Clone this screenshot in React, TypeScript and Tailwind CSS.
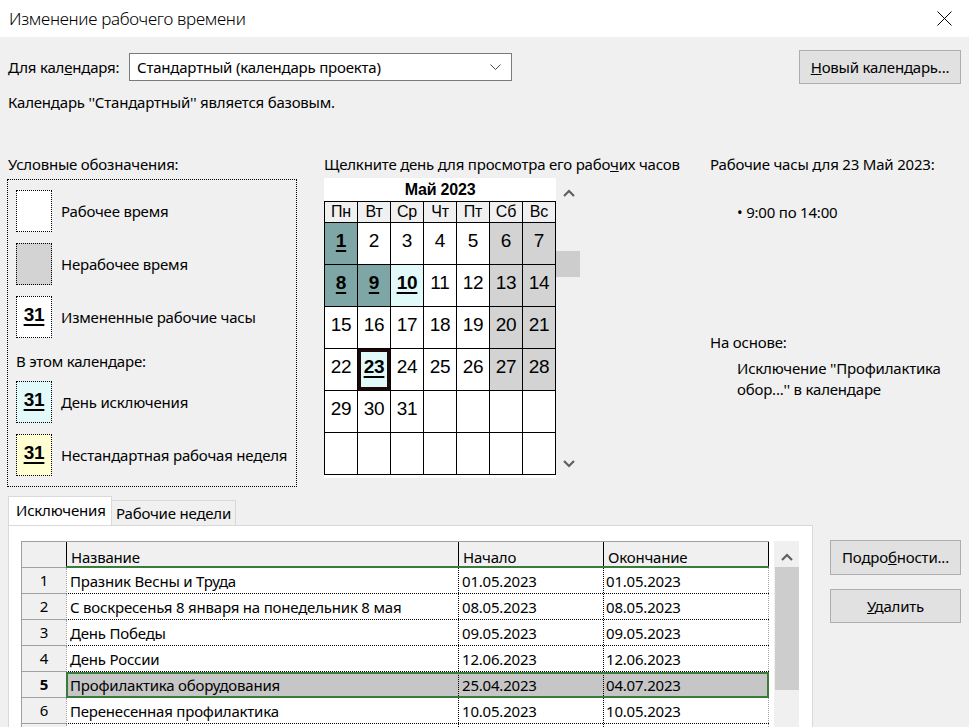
import React from "react";

const UI = "font-['Noto_Sans','Open_Sans',sans-serif]";
const ARIAL = "font-['Liberation_Sans',Arial,sans-serif]";

const DARK = "bg-[#7ea6a6]";
const LIGHT = "bg-[#e2f9f9]";
const YELLOW = "bg-[#ffffd2]";

function Chevron({ dir, className }: { dir: "up" | "down"; className?: string }) {
  return (
    <svg width="12" height="8" viewBox="0 0 12 8" className={className}>
      {dir === "up" ? (
        <polyline points="1,7 6,2 11,7" fill="none" stroke="#606060" strokeWidth="2.2" />
      ) : (
        <polyline points="1,1 6,6 11,1" fill="none" stroke="#606060" strokeWidth="2.2" />
      )}
    </svg>
  );
}

function Swatch({ kind }: { kind: "work" | "non" | "changed" | "exc" | "week" }) {
  const bg =
    kind === "work" ? "bg-white" : kind === "non" ? "bg-[#d3d3d3]" : kind === "changed" ? "bg-white" : kind === "exc" ? LIGHT : YELLOW;
  return (
    <div className={`w-[36px] h-[42px] border border-dotted border-black flex justify-center ${bg}`}>
      {kind === "changed" || kind === "exc" || kind === "week" ? (
        <span className={`${ARIAL} text-[19px] font-bold underline underline-offset-[3px] decoration-[1.5px] leading-none mt-[8px]`}>31</span>
      ) : null}
    </div>
  );
}

type CellT = "w" | "n" | "dark" | "light" | "sel";

const weeks: (number | null)[][] = [
  [1, 2, 3, 4, 5, 6, 7],
  [8, 9, 10, 11, 12, 13, 14],
  [15, 16, 17, 18, 19, 20, 21],
  [22, 23, 24, 25, 26, 27, 28],
  [29, 30, 31, null, null, null, null],
  [null, null, null, null, null, null, null],
];

function cellType(n: number | null, col: number): CellT {
  if (n === null) return "w";
  if (n === 1 || n === 8 || n === 9) return "dark";
  if (n === 10) return "light";
  if (n === 23) return "sel";
  if (col >= 5) return "n";
  return "w";
}

function Calendar() {
  const heads = ["Пн", "Вт", "Ср", "Чт", "Пт", "Сб", "Вс"];
  return (
    <div className="flex">
      <div className={`w-[232px] h-[300px] bg-white flex flex-col ${ARIAL}`}>
        <div className="h-[23px] flex items-center justify-center text-[16px] font-bold leading-none pt-[1px]">Май 2023</div>
        <div className="grid grid-cols-[repeat(7,32px)] gap-px bg-black border border-black">
          {heads.map((h) => (
            <div key={h} className="h-[20px] bg-[#f0f0f0] flex items-center justify-center text-[16px] leading-none">
              {h}
            </div>
          ))}
          {weeks.map((w, wi) =>
            w.map((n, ci) => {
              const t = cellType(n, ci);
              const bg =
                t === "n" ? "bg-[#d3d3d3]" : t === "dark" ? DARK : t === "light" || t === "sel" ? LIGHT : "bg-white";
              const special = t === "dark" || t === "light" || t === "sel";
              return (
                <div
                  key={`${wi}-${ci}`}
                  className={`h-[41px] flex justify-center ${bg} ${t === "sel" ? "border-[3px] border-[#1c0808] pt-[5px]" : "pt-[8px]"}`}
                >
                  {n !== null && (
                    <span
                      className={`text-[19px] leading-none ${special ? "font-bold underline underline-offset-[3px] decoration-[1.5px]" : ""}`}
                    >
                      {n}
                    </span>
                  )}
                </div>
              );
            })
          )}
        </div>
      </div>
      <div className="w-[25px] h-[300px] bg-[#f0f0f0] flex flex-col items-center">
        <Chevron dir="up" className="mt-[11px]" />
        <div className="w-[24px] h-[26px] bg-[#cdcdcd] mt-[54px] -ml-[2px]" />
        <div className="flex-1" />
        <Chevron dir="down" className="mb-[10px]" />
      </div>
    </div>
  );
}

const rows = [
  { n: 1, name: "Празник Весны и Труда", s: "01.05.2023", e: "01.05.2023" },
  { n: 2, name: "С воскресенья 8 января на понедельник 8 мая", s: "08.05.2023", e: "08.05.2023" },
  { n: 3, name: "День Победы", s: "09.05.2023", e: "09.05.2023" },
  { n: 4, name: "День России", s: "12.06.2023", e: "12.06.2023" },
  { n: 5, name: "Профилактика оборудования", s: "25.04.2023", e: "04.07.2023", sel: true },
  { n: 6, name: "Перенесенная профилактика", s: "10.05.2023", e: "10.05.2023" },
  { n: 7, name: "", s: "", e: "" },
];

function Table() {
  return (
    <div className="flex">
      <div className="w-[748px] border-t border-[#a0a0a0] border-l border-l-[#a0a0a0]">
        <div className="flex h-[26px]">
          <div className="w-[44px] bg-[#f0f0f0] border-b border-[#a0a0a0]" />
          <div className="flex flex-1 bg-[#f0f0f0] border-b-2 border-[#3a7a3a]">
            <div className="w-[392px] border-l border-black pl-[4px] pt-[5px] leading-[20px]">Название</div>
            <div className="w-[145px] border-l border-black pl-[4px] pt-[5px] leading-[20px]">Начало</div>
            <div className="w-[166px] border-l border-r border-black pl-[4px] pt-[5px] leading-[20px]">Окончание</div>
          </div>
        </div>
        {rows.map((r) => (
          <div key={r.n} className="flex h-[26px]">
            <div
              className={`w-[44px] bg-[#f0f0f0] border-b border-[#a0a0a0] flex items-center justify-center ${r.sel ? "font-bold" : ""}`}
            >
              {r.n <= 6 ? r.n : ""}
            </div>
            <div
              className={`flex flex-1 border-l border-[#a0a0a0] ${
                r.sel ? "bg-[#c6c6c6] outline-2 outline-[#3a7a3a] -outline-offset-2" : "border-b border-b-black border-dotted"
              }`}
            >
              <div className="w-[391px] pl-[3px] flex items-center whitespace-nowrap pt-px">{r.name}</div>
              <div className="w-[145px] border-l border-dotted border-black pl-[3px] flex items-center pt-px">{r.s}</div>
              <div className="w-[166px] border-l border-dotted border-black pl-[2px] flex items-center pt-px border-r border-r-[#a0a0a0]">
                {r.e}
              </div>
            </div>
          </div>
        ))}
      </div>
      <div className="ml-[5px] w-[25px] h-[200px] bg-[#f0f0f0] flex flex-col items-center">
        <Chevron dir="up" className="mt-[12px]" />
        <div className="w-[24px] h-[123px] bg-[#cdcdcd] mt-[6px]" />
      </div>
    </div>
  );
}

function Btn({ children, className }: { children: React.ReactNode; className?: string }) {
  return (
    <div className={`bg-[#e1e1e1] border border-[#adadad] flex items-center justify-center ${className ?? ""}`}>{children}</div>
  );
}

export default function App() {
  return (
    <div className={`w-[969px] h-[727px] overflow-hidden bg-[#f0f0f0] text-[15px] tracking-[-0.2px] text-black ${UI}`}>
      <div className="h-[37px] bg-white flex items-center justify-between pl-[9px] pr-[17px]">
        <span className="text-[17px] font-light tracking-[-0.3px]">Изменение рабочего времени</span>
        <svg width="15" height="15" viewBox="0 0 15 15">
          <line x1="0.5" y1="0.5" x2="14.5" y2="14.5" stroke="#000" strokeWidth="1" />
          <line x1="14.5" y1="0.5" x2="0.5" y2="14.5" stroke="#000" strokeWidth="1" />
        </svg>
      </div>

      <div className="pl-[8px] pr-[8px]">
        <div className="mt-[13px] h-[34px] flex items-center">
          <span className="w-[121px]">
            Для кал<span className="underline">е</span>ндаря:
          </span>
          <div className="w-[383px] h-[28px] bg-white border border-[#7a7a7a] flex items-center justify-between pl-[7px] pr-[10px]">
            <span>Стандартный (календарь проекта)</span>
            <svg width="11" height="7" viewBox="0 0 11 7">
              <polyline points="0.5,0.5 5.5,5.5 10.5,0.5" fill="none" stroke="#444" strokeWidth="1" />
            </svg>
          </div>
          <div className="flex-1" />
          <Btn className="w-[162px] h-[34px]">
            <span>
              <span className="underline">Н</span>овый календарь...
            </span>
          </Btn>
        </div>

        <div className="mt-[8px] h-[20px] leading-[20px]">Календарь ''Стандартный'' является базовым.</div>

        <div className="mt-[42px] h-[343px] flex -ml-px">
          <div className="w-[290px]">
            <div className="h-[20px] leading-[20px] pl-px">Условные обозначения:</div>
            <div className="mt-[5px] h-[308px] border border-dotted border-black pl-[8px] pt-[10px]">
              <div className="flex items-center">
                <Swatch kind="work" />
                <span className="ml-[9px]">Рабочее время</span>
              </div>
              <div className="flex items-center mt-[11px]">
                <Swatch kind="non" />
                <span className="ml-[9px]">Нерабочее время</span>
              </div>
              <div className="flex items-center mt-[11px]">
                <Swatch kind="changed" />
                <span className="ml-[9px]">Измененные рабочие часы</span>
              </div>
              <div className="mt-[13px] h-[20px] leading-[20px]">В этом календаре:</div>
              <div className="flex items-center mt-[10px]">
                <Swatch kind="exc" />
                <span className="ml-[9px]">День исключения</span>
              </div>
              <div className="flex items-center mt-[11px]">
                <Swatch kind="week" />
                <span className="ml-[9px]">Нестандартная рабочая неделя</span>
              </div>
            </div>
          </div>

          <div className="ml-[27px] w-[386px]">
            <div className="h-[20px] leading-[20px]">Щелкните день для просмотра его рабо<span className="underline">ч</span>их часов</div>
            <div className="mt-[4px]">
              <Calendar />
            </div>
          </div>

          <div className="flex-1">
            <div className="h-[20px] leading-[20px]">Рабочие часы для 23 Май 2023:</div>
            <div className="mt-[28px] pl-[27px] h-[20px] leading-[20px]">• 9:00 по 14:00</div>
            <div className="mt-[110px] h-[20px] leading-[20px]">На основе:</div>
            <div className="mt-[6px] pl-[27px] leading-[21px]">
              Исключение ''Профилактика
              <br />
              обор...'' в календаре
            </div>
          </div>
        </div>

        <div className="flex">
          <div className="w-[805px]">
            <div className="flex items-end h-[28px]">
              <div className="w-[104px] h-[29px] bg-white border border-[#d9d9d9] border-b-0 pl-[7px] leading-[27px] relative z-10">
                Исключения
              </div>
              <div className="w-[124px] h-[25px] bg-[#f0f0f0] border border-[#d9d9d9] border-b-0 border-l-0 pl-[4px] leading-[25px]">
                Рабочие недели
              </div>
            </div>
            <div className="h-[210px] bg-white border border-[#d9d9d9] pl-[12px] pt-[15px]">
              <Table />
            </div>
          </div>
          <div className="ml-[17px] mt-[43px]">
            <Btn className="w-[131px] h-[35px]">
              <span>
                Подро<span className="underline">б</span>ности...
              </span>
            </Btn>
            <Btn className="w-[131px] h-[34px] mt-[14px]">
              <span>
                <span className="underline">У</span>далить
              </span>
            </Btn>
          </div>
        </div>
      </div>
    </div>
  );
}
